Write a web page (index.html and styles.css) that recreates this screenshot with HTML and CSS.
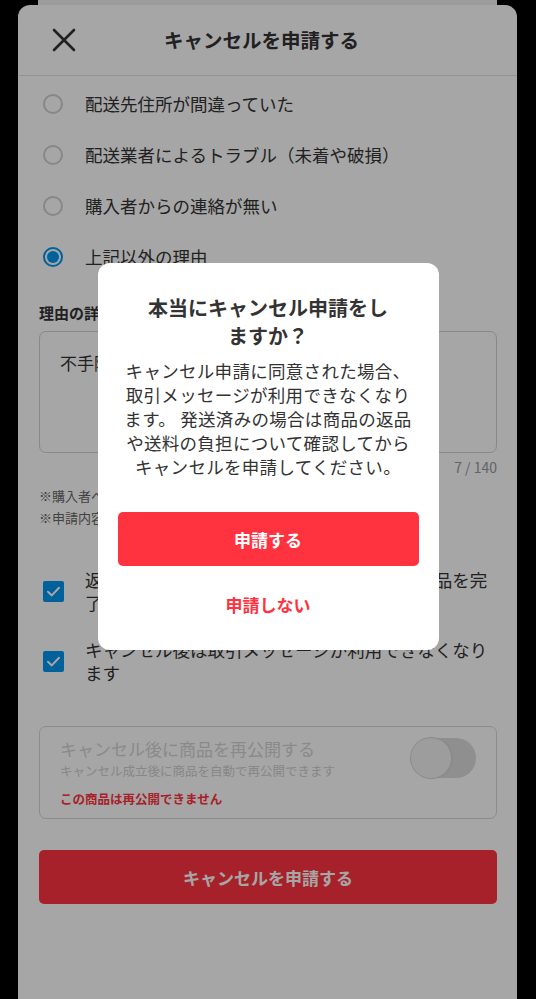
FILE: index.html
```html
<!DOCTYPE html>
<html lang="ja">
<head>
<meta charset="utf-8">
<title>キャンセルを申請する</title>
<link rel="stylesheet" href="styles.css">
</head>
<body>
<div class="behind"></div>
<main class="sheet">
  <header class="head">
    <button class="close" aria-label="閉じる">
      <svg width="24" height="24" viewBox="0 0 24 24"><path d="M2 2 L22 22 M22 2 L2 22" stroke="#333" stroke-width="2.6" stroke-linecap="round" fill="none"/></svg>
    </button>
    <h1 class="title">キャンセルを申請する</h1>
  </header>

  <ul class="radios">
    <li class="radio-row"><span class="radio"></span><span class="rtext">配送先住所が間違っていた</span></li>
    <li class="radio-row"><span class="radio"></span><span class="rtext">配送業者によるトラブル（未着や破損）</span></li>
    <li class="radio-row"><span class="radio"></span><span class="rtext">購入者からの連絡が無い</span></li>
    <li class="radio-row"><span class="radio on"></span><span class="rtext">上記以外の理由</span></li>
  </ul>

  <div class="label">理由の詳細</div>
  <div class="textarea">不手際があったため</div>
  <div class="counter">7 / 140</div>
  <p class="notes">※購入者へキャンセル理由が通知されます<br>※申請内容はあとから変更できません</p>

  <div class="check-row">
    <span class="check"><svg width="21" height="21" viewBox="0 0 21 21"><path d="M5 10.8 L8.8 14.4 L16 6.8" stroke="#fff" stroke-width="2" fill="none" stroke-linecap="round" stroke-linejoin="round"/></svg></span>
    <span class="ctext">返品が必要な場合は購入者との間で商品の返品を完了していること</span>
  </div>
  <div class="check-row">
    <span class="check"><svg width="21" height="21" viewBox="0 0 21 21"><path d="M5 10.8 L8.8 14.4 L16 6.8" stroke="#fff" stroke-width="2" fill="none" stroke-linecap="round" stroke-linejoin="round"/></svg></span>
    <span class="ctext">キャンセル後は取引メッセージが利用できなくなります</span>
  </div>

  <div class="relist">
    <div class="relist-text">
      <div class="relist-title">キャンセル後に商品を再公開する</div>
      <div class="relist-sub">キャンセル成立後に商品を自動で再公開できます</div>
      <div class="relist-err">この商品は再公開できません</div>
    </div>
    <span class="toggle"><span class="knob"></span></span>
  </div>

  <button class="submit">キャンセルを申請する</button>
</main>

<div class="overlay">
  <div class="modal" role="dialog">
    <h2 class="m-title">本当にキャンセル申請をし<br>ますか？</h2>
    <p class="m-body">キャンセル申請に同意された場合、<br>取引メッセージが利用できなくなり<br>ます。 発送済みの場合は商品の返品<br>や送料の負担について確認してから<br>キャンセルを申請してください。</p>
    <button class="m-ok">申請する</button>
    <button class="m-cancel">申請しない</button>
  </div>
</div>
</body>
</html>
```

FILE: styles.css
```css
* { box-sizing: border-box; }
html, body { margin: 0; padding: 0; }
body {
  background: #000;
  font-family: "Noto Sans CJK JP", "Noto Sans", sans-serif;
  color: #333;
  width: 536px;
  height: 999px;
  overflow: hidden;
}
button { font-family: inherit; border: 0; background: none; padding: 0; cursor: pointer; }

.behind {
  height: 5px;
  margin-left: 38px;
  width: 459px;
  background: #f0f0f0;
}

.sheet {
  margin-left: 18px;
  width: 499px;
  height: 994px;
  background: #fff;
  border-radius: 12px 12px 0 0;
  padding: 0 20px 0 21px;
}

.head {
  height: 71px;
  margin: 0 -20px 0 -21px;
  border-bottom: 1px solid #e4e4e4;
  display: flex;
  align-items: center;
  position: relative;
  justify-content: center;
}
.close {
  position: absolute;
  left: 34px;
  top: 23px;
  width: 24px;
  height: 24px;
  display: flex;
}
.title {
  margin: 0;
  font-size: 19.5px;
  font-weight: 700;
  line-height: 28px;
  color: #333;
  padding-right: 12px;
}

.radios { list-style: none; margin: 0; padding: 2px 0 0 0; }
.radio-row {
  height: 51px;
  display: flex;
  align-items: center;
  padding-left: 4px;
  gap: 22px;
}
.radio {
  width: 20px;
  height: 20px;
  border-radius: 50%;
  border: 2px solid #cfcfcf;
  flex: none;
  display: flex;
  align-items: center;
  justify-content: center;
}
.radio.on { border-color: #0095ee; }
.radio.on::after {
  content: "";
  width: 12px;
  height: 12px;
  border-radius: 50%;
  background: #0095ee;
}
.rtext { font-size: 17.5px; line-height: 24px; color: #333; }

.label {
  margin-top: 20px;
  font-size: 15px;
  font-weight: 700;
  line-height: 22px;
}
.textarea {
  margin-top: 7px;
  height: 122px;
  border: 1px solid #d2d2d2;
  border-radius: 7px;
  padding: 19px 20px;
  font-size: 17px;
  line-height: 24px;
}
.counter {
  margin-top: 4px;
  text-align: right;
  font-size: 14px;
  line-height: 20px;
  color: #999;
}
.notes {
  margin: 8px 0 0;
  font-size: 13px;
  line-height: 22px;
  color: #666;
}

.check-row {
  display: flex;
  align-items: center;
  gap: 21px;
  padding-left: 4px;
  margin-top: 24px;
}
.notes + .check-row { margin-top: 39px; }
.check {
  width: 21px;
  height: 21px;
  border-radius: 2px;
  background: #0095ee;
  flex: none;
  display: flex;
}
.ctext { font-size: 17.5px; line-height: 23px; color: #333; }

.relist {
  margin-top: 42px;
  height: 93px;
  border: 1px solid #d8d8d8;
  border-radius: 7px;
  padding: 10px 20px 9px 20px;
  display: flex;
  justify-content: space-between;
  align-items: flex-start;
}
.relist-title { font-size: 17px; line-height: 24px; color: #d4d4d4; }
.relist-sub { font-size: 12.5px; line-height: 18px; color: #cfcfcf; margin-top: 1px; }
.relist-err { font-size: 12.5px; line-height: 20px; color: #ff333f; font-weight: 700; margin-top: 9px; }
.toggle {
  margin-top: 1px;
  width: 65px;
  height: 40px;
  border-radius: 20px;
  background: #dcdcdc;
  display: flex;
  flex: none;
}
.knob {
  width: 40px;
  height: 40px;
  border-radius: 50%;
  background: #f2f2f2;
  box-shadow: 0 0 0 1px #d6d6d6, 1px 0 2px rgba(0,0,0,0.08);
}

.submit {
  margin-top: 31px;
  width: 100%;
  height: 54px;
  border-radius: 5px;
  background: #ff333f;
  color: #fff;
  font-size: 17px;
  font-weight: 700;
  display: block;
}

.overlay {
  position: fixed;
  inset: 0;
  background: rgba(0,0,0,0.35);
  display: flex;
  justify-content: center;
  align-items: flex-start;
  padding-top: 263px;
}
.modal {
  width: 341px;
  background: #fff;
  border-radius: 12px;
  padding: 31px 20px 19px;
  text-align: center;
}
.m-title {
  margin: 0;
  font-size: 20px;
  font-weight: 700;
  line-height: 28px;
  color: #333;
}
.m-body {
  margin: 9px 0 0;
  font-size: 17.5px;
  letter-spacing: 0.3px;
  line-height: 24px;
  color: #333;
  white-space: nowrap;
}
.m-ok {
  margin-top: 33px;
  display: block;
  width: 100%;
  height: 54px;
  border-radius: 5px;
  background: #ff333f;
  color: #fff;
  font-size: 17px;
  font-weight: 700;
}
.m-cancel {
  margin-top: 11px;
  display: block;
  width: 100%;
  height: 54px;
  color: #ff333f;
  font-size: 17px;
  font-weight: 700;
}
```
